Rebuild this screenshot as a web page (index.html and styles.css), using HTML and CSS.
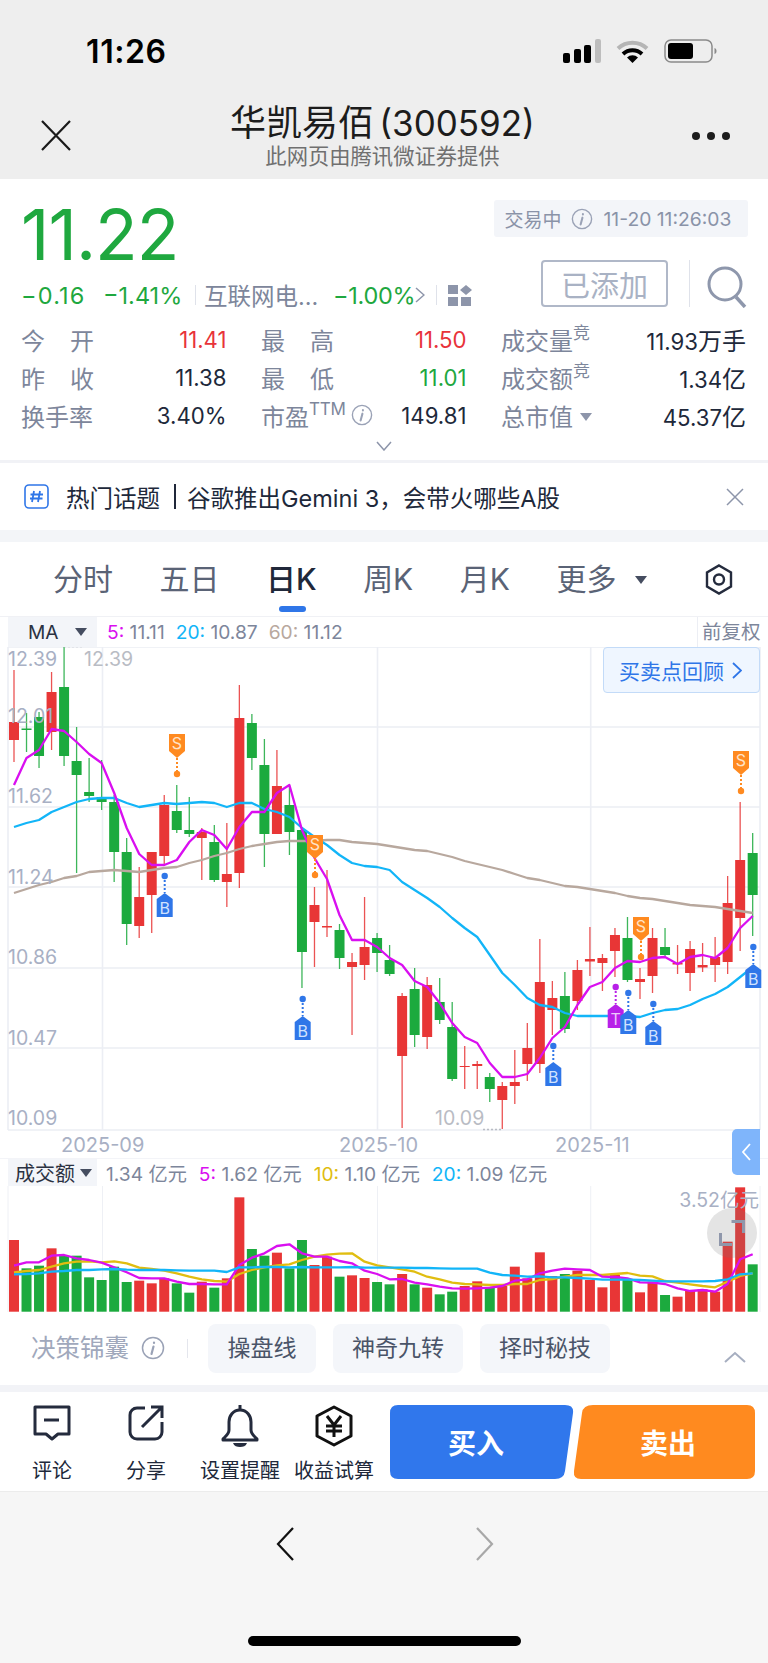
FILE: index.html
```html
<!DOCTYPE html>
<html lang="zh-CN">
<head>
    <meta charset="UTF-8">
    <meta name="viewport" content="width=device-width, initial-scale=1.0">
    <title>华凯易佰 (300592)</title>
    <link rel="stylesheet" href="styles.css">
</head>
<body>
    <header class="topbar">
        <div class="status-bar">
            <span class="clock">11:26</span>
            <div class="status-icons">
                <svg width="38" height="24" viewBox="0 0 38 24"><rect x="0" y="14" width="7" height="10" rx="2" fill="#000"/><rect x="11" y="10" width="7" height="14" rx="2" fill="#000"/><rect x="21" y="6" width="7" height="18" rx="2" fill="#000"/><rect x="32" y="0" width="6" height="24" rx="2" fill="#bdbdbd"/></svg>
                <svg width="33" height="24" viewBox="0 0 33 24"><path d="M2 9.5a21 21 0 0 1 29 0" fill="none" stroke="#b5b5b5" stroke-width="4"/><path d="M7 15a14 14 0 0 1 19 0" fill="none" stroke="#000" stroke-width="4"/><path d="M11 18.5a8 8 0 0 1 11 0L16.500 24z" fill="#000"/></svg>
                <svg width="53" height="24" viewBox="0 0 53 24"><rect x="1" y="1" width="47" height="22" rx="6" fill="none" stroke="#8a8a8a" stroke-width="1.500"/><rect x="4" y="4" width="25" height="16" rx="3" fill="#000"/><path d="M50.500 9c1.500.5 2 1.500 2 3s-.5 2.500-2 3z" fill="#8a8a8a"/></svg>
            </div>
        </div>
        <div class="nav-bar">
            <svg class="nav-close" width="30" height="31" viewBox="0 0 30 31"><path d="M1 1l28 29M29 1L1 30" fill="none" stroke="#1a1a1a" stroke-width="2.200"/></svg>
            <div class="nav-title">
                <h1>华凯易佰 <span class="nav-code">(300592)</span></h1>
                <p>此网页由腾讯微证券提供</p>
            </div>
            <div class="nav-dots"><i></i><i></i><i></i></div>
        </div>
    </header>

    <section class="quote">
        <div class="price-row">
            <div class="price">11.22</div>
            <div class="time-badge">
                <span>交易中</span>
                <svg class="info-icon" width="22" height="22" viewBox="0 0 24 24"><circle cx="12" cy="12" r="10.500" fill="none" stroke="#9aa2b6" stroke-width="1.500"/><path d="M13 6.500v.5M12.500 10.500L10.500 18" fill="none" stroke="#9aa2b6" stroke-width="2.200" stroke-linecap="round"/></svg>
                <span class="badge-time">11-20 11:26:03</span>
            </div>
        </div>
        <div class="change-row">
            <div class="change-group">
                <span class="green change">−0.16</span>
                <span class="green change-pct">−1.41%</span>
                <i class="change-sep"></i>
                <span class="sector">互联网电...</span>
                <span class="green sector-pct">−1.00%</span>
                <svg class="sector-arrow" width="10" height="16" viewBox="0 0 10 16"><path d="M1 1l8 7-8 7" fill="none" stroke="#8d95aa" stroke-width="1.500"/></svg>
                <i class="change-sep sep-second"></i>
                <svg class="sector-icon" width="24" height="21" viewBox="0 0 24 21"><rect x="0" y="0" width="10" height="9" fill="#8d95aa"/><rect x="0" y="12" width="10" height="9" fill="#8d95aa"/><rect x="13" y="12" width="10" height="9" fill="#8d95aa"/><path d="M18 0l6 5-6 5-6-5z" fill="#8d95aa"/></svg>
            </div>
            <button class="added-btn">已添加</button>
            <i class="search-sep"></i>
            <svg class="search-icon" width="40" height="42" viewBox="0 0 40 42"><circle cx="18" cy="18" r="16" fill="none" stroke="#8e97ac" stroke-width="3"/><path d="M29 31l9 10" fill="none" stroke="#8e97ac" stroke-width="3.500"/></svg>
        </div>
        <div class="stats">
            <div class="stat"><span class="label wide">今开</span><span class="value red">11.41</span></div>
            <div class="stat"><span class="label wide">最高</span><span class="value red">11.50</span></div>
            <div class="stat"><span class="label">成交量<sup>竞</sup></span><span class="value">11.93<span class="unit">万手</span></span></div>
            <div class="stat"><span class="label wide">昨收</span><span class="value">11.38</span></div>
            <div class="stat"><span class="label wide">最低</span><span class="value green">11.01</span></div>
            <div class="stat"><span class="label">成交额<sup>竞</sup></span><span class="value">1.34<span class="unit">亿</span></span></div>
            <div class="stat"><span class="label">换手率</span><span class="value">3.40%</span></div>
            <div class="stat">
                <span class="label">市盈<sup class="ttm">TTM</sup><svg class="ttm-info" width="22" height="22" viewBox="0 0 24 24"><circle cx="12" cy="12" r="10.500" fill="none" stroke="#9aa2b6" stroke-width="1.500"/><path d="M13 6.500v.5M12.500 10.500L10.500 18" fill="none" stroke="#9aa2b6" stroke-width="2.200" stroke-linecap="round"/></svg></span>
                <span class="value">149.81</span>
            </div>
            <div class="stat"><span class="label">总市值<i class="caret-down light"></i></span><span class="value">45.37<span class="unit">亿</span></span></div>
        </div>
        <div class="expand">
            <svg width="16" height="10" viewBox="0 0 16 10"><path d="M1 1l7 8 7-8" fill="none" stroke="#8d95aa" stroke-width="1.500"/></svg>
        </div>
    </section>

    <section class="topic">
        <svg width="25" height="25" viewBox="0 0 25 25"><rect x="1" y="1" width="23" height="23" rx="4" fill="#fff" stroke="#2f76e8" stroke-width="1.600"/><path d="M10 7l-2 11M16 7l-2 11M6.500 10.500h12.500M6 14.500h12.500" fill="none" stroke="#2f76e8" stroke-width="1.800"/></svg>
        <span class="topic-text">热门话题<i class="topic-bar"></i>谷歌推出Gemini 3，会带火哪些A股</span>
        <svg class="topic-close" width="18" height="18" viewBox="0 0 18 18"><path d="M1 1l16 16M17 1L1 17" fill="none" stroke="#8d95aa" stroke-width="1.500"/></svg>
    </section>

    <nav class="tabs">
        <span class="tab">分时</span>
        <span class="tab">五日</span>
        <span class="tab active">日K</span>
        <span class="tab">周K</span>
        <span class="tab">月K</span>
        <span class="tab">更多</span>
        <i class="caret-down dark tab-caret"></i>
        <svg class="tab-settings" width="28" height="31" viewBox="0 0 28 31"><path d="M14 1.500l12 7v14l-12 7-12-7v-14z" fill="none" stroke="#242b3d" stroke-width="2.400"/><circle cx="14" cy="15.500" r="5" fill="none" stroke="#242b3d" stroke-width="2.400"/></svg>
    </nav>

    <section class="chart">
        <div class="legend">
            <div class="legend-select">MA<i class="caret-down dark"></i></div>
            <div class="legend-values">
                <span><b class="c-ma5">5:</b> 11.11</span>
                <span><b class="c-ma20">20:</b> 10.87</span>
                <span><b class="c-ma60">60:</b> 11.12</span>
            </div>
            <div class="legend-adjust">前复权</div>
        </div>
        <div class="kline">
            <svg id="kline-svg" width="768" height="511" viewBox="0 647 768 511">
                <g class="grid">
                    <path d="M8 647H760M8 727H760M8 807H760M8 887H760M8 968H760M8 1048H760M8 1130H760M8 647V1130M102.500 647V1130M377.500 647V1130M590.700 647V1130M760 647V1130"/>
                </g>
                <g id="kline-plot"></g>
                <g class="axis">
                    <text x="8" y="666">12.39</text>
                    <text x="8" y="723">12.01</text>
                    <text x="8" y="803">11.62</text>
                    <text x="8" y="884">11.24</text>
                    <text x="8" y="964">10.86</text>
                    <text x="8" y="1045">10.47</text>
                    <text x="8" y="1125">10.09</text>
                    <text class="extreme" x="84" y="666">12.39</text>
                    <text class="extreme" x="435" y="1125">10.09</text>
                    <text class="date" x="61" y="1152">2025-09</text>
                    <text class="date" x="339" y="1152">2025-10</text>
                    <text class="date" x="555" y="1152">2025-11</text>
                </g>
                <path class="dots" d="M64 646.500H84M483 1129.500H503"/>
                <g id="kline-marks"></g>
            </svg>
            <div class="review-btn">买卖点回顾<svg width="10" height="17" viewBox="0 0 10 17"><path d="M1 1l8 7.500-8 7.500" fill="none" stroke="#2f76e8" stroke-width="1.800"/></svg></div>
        </div>
        <div class="legend legend-vol">
            <div class="legend-select">成交额<i class="caret-down dark"></i></div>
            <div class="legend-values">
                <span>1.34 亿元</span>
                <span><b class="c-ma5">5:</b> 1.62 亿元</span>
                <span><b class="c-vol10">10:</b> 1.10 亿元</span>
                <span><b class="c-ma20">20:</b> 1.09 亿元</span>
            </div>
        </div>
        <div class="volume">
            <svg id="volume-svg" width="768" height="127" viewBox="0 1186 768 127">
                <path class="grid-thin" d="M8 1186V1312M102.500 1186V1312M377.500 1186V1312M590.700 1186V1312M760 1186V1312"/>
                <g id="volume-plot"></g>
                <text class="axis-max" x="759" y="1207">3.52亿元</text>
            </svg>
            <div class="zoom-knob">
                <svg width="26" height="26" viewBox="0 0 26 26"><path d="M12.500 1.500H24.500V13M1.500 13V24.500H13" fill="none" stroke="#8f97ab" stroke-width="3"/></svg>
            </div>
        </div>
        <div class="collapse-tab"><svg width="9" height="18" viewBox="0 0 9 18"><path d="M8 1L1 9l7 8" fill="none" stroke="#fff" stroke-width="1.800"/></svg></div>
    </section>

    <section class="tools">
        <span class="tools-title">决策锦囊</span>
        <svg class="tools-info" width="24" height="24" viewBox="0 0 24 24"><circle cx="12" cy="12" r="10.500" fill="none" stroke="#9aa2b6" stroke-width="1.500"/><path d="M13 6.500v.5M12.500 10.500L10.500 18" fill="none" stroke="#9aa2b6" stroke-width="2.200" stroke-linecap="round"/></svg>
        <i class="tools-sep"></i>
        <span class="chip chip-short">操盘线</span>
        <span class="chip">神奇九转</span>
        <span class="chip">择时秘技</span>
        <svg class="tools-caret" width="22" height="12" viewBox="0 0 22 12"><path d="M1 11l10-9 10 9" fill="none" stroke="#a6aec0" stroke-width="2"/></svg>
    </section>

    <footer class="actionbar">
        <div class="action">
            <svg width="38" height="36" viewBox="0 0 38 36"><path d="M2 2h34v27H25l-6 5-6-5H2z" fill="none" stroke="#242b3d" stroke-width="3" stroke-linejoin="round"/><path d="M11 15h15" stroke="#242b3d" stroke-width="3"/></svg>
            <span>评论</span>
        </div>
        <div class="action">
            <svg width="36" height="36" viewBox="0 0 36 36"><path d="M17 3H9a7 7 0 0 0-7 7v17a7 7 0 0 0 7 7h18a7 7 0 0 0 7-7V17" fill="none" stroke="#242b3d" stroke-width="3"/><path d="M14 22L33 3M23 2h11v11" fill="none" stroke="#242b3d" stroke-width="3"/></svg>
            <span>分享</span>
        </div>
        <div class="action">
            <svg width="40" height="42" viewBox="0 0 40 42"><path d="M20 5c-7 0-11 6-11 12v8c0 4-3 6-6 9v1h34v-1c-3-3-6-5-6-9v-8c0-6-4-12-11-12z" fill="none" stroke="#242b3d" stroke-width="3" stroke-linejoin="round"/><path d="M20 0v5" stroke="#242b3d" stroke-width="3"/><path d="M13 38h14c-1 3-4 4-7 4s-6-1-7-4z" fill="#242b3d"/></svg>
            <span>设置提醒</span>
        </div>
        <div class="action">
            <svg width="40" height="42" viewBox="0 0 40 42"><path d="M20 2l17 9v20l-17 9-17-9V11z" fill="none" stroke="#111" stroke-width="3" stroke-linejoin="round"/><path d="M13 11l7 9 7-9M20 20v12M12 21h16M12 26h16" fill="none" stroke="#111" stroke-width="3"/></svg>
            <span>收益试算</span>
        </div>
        <button class="trade-btn buy">买入</button>
        <button class="trade-btn sell">卖出</button>
    </footer>

    <div class="browser-bar">
        <div class="browser-arrows">
            <svg width="18" height="34" viewBox="0 0 18 34"><path d="M17 1L2 17l15 16" fill="none" stroke="#111" stroke-width="2.200"/></svg>
            <svg width="18" height="34" viewBox="0 0 18 34"><path d="M1 1l15 16L1 33" fill="none" stroke="#a8a8a8" stroke-width="2.200"/></svg>
        </div>
        <div class="home-indicator"></div>
    </div>

    <script src="chart.js"></script>
</body>
</html>
```

FILE: styles.css
```css
* {
    box-sizing: border-box;
}

body {
    margin: 0;
    width: 768px;
    height: 1663px;
    overflow: hidden;
    background-color: #fff;
    color: #20283a;
    font-family: Inter, "Noto Sans CJK SC", sans-serif;
}

i {
    display: block;
    font-style: normal;
}

.green { color: #1fa83f; }
.red { color: #e8333a; }

.caret-down {
    display: inline-block;
    width: 0;
    height: 0;
    border-left: 6px solid transparent;
    border-right: 6px solid transparent;
    border-top: 8px solid #8d95aa;
}

.caret-down.dark {
    border-top-color: #454d60;
}

/* top bar */
.topbar {
    height: 179px;
    background-color: #eeeeee;
}

.status-bar {
    height: 100px;
    display: flex;
    padding: 39px 51px 0 86px;
    justify-content: space-between;
}

.clock {
    font-size: 32px;
    font-weight: 600;
    line-height: 26px;
    letter-spacing: 0.6px;
    color: #000;
}

.status-icons {
    display: flex;
    gap: 15px;
    height: 24px;
}

.nav-bar {
    height: 79px;
    display: flex;
    align-items: flex-start;
    padding: 0 38px 0 41px;
}

.nav-close {
    margin-top: 20px;
}

.nav-title {
    flex: 1;
    text-align: center;
    padding-left: 2px;
}

.nav-title h1 {
    margin: 3px 0 0;
    font-size: 36px;
    font-weight: 400;
    line-height: 40px;
    word-spacing: -5px;
    color: #1c1c1c;
}

.nav-code {
    font-size: 35px;
}

.nav-title p {
    margin: -1px 0 0;
    font-size: 21.300px;
    line-height: 28px;
    color: #707070;
}

.nav-dots {
    display: flex;
    gap: 7px;
    margin-top: 32px;
}

.nav-dots i {
    width: 8px;
    height: 8px;
    border-radius: 50%;
    background-color: #1c1c1c;
}

/* quote */
.quote {
    height: 284px;
    padding: 0 21px 0 21px;
    border-bottom: 3px solid #f1f2f6;
}

.price-row {
    height: 81px;
    display: flex;
    justify-content: space-between;
    align-items: flex-start;
    padding-top: 21px;
}

.price {
    font-size: 70px;
    line-height: 70px;
    letter-spacing: -1px;
    color: #1fa83f;
}

.time-badge {
    width: 254px;
    height: 37px;
    display: flex;
    align-items: center;
    padding-left: 11px;
    gap: 9px;
    margin-right: -0.5px;
    border-radius: 3px;
    background-color: #f3f5f9;
    color: #8a93a8;
    font-size: 19px;
    white-space: nowrap;
}

.badge-time {
    margin-left: 2px;
    font-size: 19.300px;
}

.change-row {
    height: 61px;
    display: flex;
    align-items: flex-start;
}

.change-group {
    display: flex;
    align-items: center;
    height: 48px;
    margin-top: 11px;
    font-size: 23.500px;
    white-space: nowrap;
}

.change { width: 82px; letter-spacing: 1.200px; }
.change-pct { width: 92px; }
.sector { margin-left: 8px; color: #7d869b; width: 129px; }
.sector-pct { width: 82px; letter-spacing: -0.3px; }
.sector-icon { margin-left: 11px; }

.change-sep {
    width: 1px;
    height: 20px;
    background-color: #dfe2ea;
}

.sep-second {
    margin-left: 11px;
}

.added-btn {
    width: 127px;
    height: 47px;
    margin-left: auto;
    border: 2px solid #b0b8c8;
    border-radius: 4px;
    background-color: #fff;
    color: #a9b2c4;
    font: inherit;
    font-size: 29px;
    padding: 0;
}

.search-sep {
    width: 1px;
    height: 47px;
    margin: 0 17px 0 21px;
    background-color: #dfe2ea;
}

.search-icon {
    margin-top: 6px;
}

.stats {
    display: grid;
    grid-template-columns: 205.500px 205.500px 245px;
    column-gap: 34.500px;
    grid-auto-rows: 38px;
    margin-top: -1px;
}

.stat {
    display: flex;
    justify-content: space-between;
    align-items: center;
    white-space: nowrap;
}

.label {
    display: flex;
    align-items: center;
    font-size: 24px;
    color: #7d869b;
}

.label.wide {
    display: block;
    width: 73px;
    text-align: justify;
    text-align-last: justify;
}

.label sup {
    font-size: 17px;
    line-height: 1;
    align-self: flex-start;
    margin-top: 3px;
}

.label sup.ttm {
    letter-spacing: -0.2px;
}

.ttm-info {
    margin-left: 5px;
}

.label .caret-down {
    margin-left: 7px;
    margin-top: 3px;
}

.value {
    font-size: 22.200px;
    color: #20283a;
}

.value .unit {
    font-size: 24px;
}

.value.red { color: #e8333a; }
.value.green { color: #1fa83f; }

.expand {
    height: 22px;
    display: flex;
    justify-content: center;
    padding-top: 7px;
}

/* topic strip */
.topic {
    height: 67px;
    display: flex;
    align-items: center;
    padding-left: 24px;
}

.topic-text {
    display: flex;
    align-items: center;
    margin-left: 17px;
    font-size: 23.500px;
    color: #20283a;
    white-space: pre;
}

.topic-bar {
    width: 2px;
    height: 25px;
    margin: 0 11px 0 14px;
    background-color: #20283a;
}

.topic-close {
    margin-left: auto;
    margin-right: 24px;
}

/* tabs */
.tabs {
    height: 86px;
    padding: 12px 0 0 53px;
    display: flex;
    align-items: center;
    gap: 46.500px;
    border-top: 12px solid #f3f5f8;
    color: #5a6376;
    font-size: 30px;
    position: relative;
}

.tab {
    position: relative;
    line-height: 40px;
    margin-top: -12px;
}

.tab.active {
    color: #20283a;
    font-weight: 500;
}

.tab.active::after {
    content: "";
    position: absolute;
    left: 13px;
    top: 47px;
    width: 27px;
    height: 6px;
    border-radius: 3px;
    background-color: #2f76e8;
}

.tab-caret {
    margin: -10px 0 0 -28px;
}

.tab-settings {
    margin: -12px 35px 0 auto;
}

/* chart */
.chart {
    position: relative;
}

.legend {
    height: 31px;
    display: flex;
    border-top: 1.500px solid #f0f1f5;
    font-size: 19.200px;
    color: #7d869b;
}

.legend-select {
    width: 89px;
    margin-left: 8px;
    padding-left: 20px;
    display: flex;
    align-items: center;
    gap: 16px;
    background-color: #f3f5f9;
    color: #2b3242;
}

.legend-values {
    display: flex;
    align-items: center;
    gap: 11px;
    padding-left: 10px;
    white-space: nowrap;
}

.legend-values b {
    font-weight: 400;
}

.c-ma5 { color: #d90ff0; }
.c-ma20 { color: #12b5f8; }
.c-ma60 { color: #b8a89e; }
.c-vol10 { color: #e0bd10; }

.legend-adjust {
    margin-left: auto;
    width: 71px;
    padding-left: 4px;
    font-size: 19.500px;
    line-height: 30px;
    border-left: 1.500px solid #eceef4;
}

.legend-vol {
    height: 28px;
    border-top: 1.500px solid #f3f4f8;
}

.legend-vol .legend-select {
    padding-left: 7px;
    gap: 5px;
    font-size: 20px;
}

.legend-vol .legend-values {
    gap: 12px;
    padding-left: 9px;
}

.kline,
.volume {
    position: relative;
}

.kline svg,
.volume svg {
    display: block;
}

.grid path {
    fill: none;
    stroke: #eceef4;
    stroke-width: 1.600;
}

.grid-thin {
    fill: none;
    stroke: #eef0f5;
    stroke-width: 1;
}

.axis text,
.axis-max {
    font-size: 19.500px;
    fill: #a8b0c4;
}

.axis .date {
    font-size: 20px;
}

.axis .extreme {
    fill: #b9bcc4;
}

.axis-max {
    text-anchor: end;
}

.dots {
    fill: none;
    stroke: #b9bcc4;
    stroke-width: 1.500;
    stroke-dasharray: 2 2;
}

.mark-label {
    font-size: 16px;
    text-anchor: middle;
}

.review-btn {
    position: absolute;
    top: 0;
    left: 603px;
    width: 157px;
    height: 46px;
    display: flex;
    align-items: center;
    gap: 8px;
    padding-left: 15px;
    border: 1px solid #c3dbf8;
    border-radius: 4px;
    background-color: #eff6ff;
    color: #2f76e8;
    font-size: 21px;
    white-space: nowrap;
}

.collapse-tab {
    position: absolute;
    left: 732px;
    top: 513px;
    width: 28px;
    height: 46px;
    display: flex;
    align-items: center;
    justify-content: center;
    border-radius: 5px 0 0 5px;
    background-color: #7fb5fb;
}

.zoom-knob {
    position: absolute;
    left: 707px;
    top: 22px;
    width: 50px;
    height: 50px;
    display: flex;
    align-items: center;
    justify-content: center;
    border-radius: 50%;
    background-color: rgba(120, 120, 120, 0.2);
}

/* tools row */
.tools {
    height: 79px;
    display: flex;
    align-items: flex-start;
    padding: 11px 0 0 31px;
    border-bottom: 7px solid #f2f3f7;
}

.tools-title {
    font-size: 24.500px;
    line-height: 49px;
    color: #a0a8bc;
    width: 98px;
}

.tools-info {
    margin: 12px 0 0 12px;
}

.tools-sep {
    width: 1px;
    height: 19px;
    margin: 15px 20px 0 22px;
    background-color: #e4e6ed;
}

.chip {
    width: 130px;
    height: 49px;
    margin-right: 17px;
    border-radius: 8px;
    background-color: #f4f6fa;
    color: #4a5468;
    font-size: 23px;
    line-height: 48px;
    text-align: center;
}

.chip-short {
    width: 108px;
}

.tools-caret {
    margin: 27px 0 0 97px;
}

/* action bar */
.actionbar {
    height: 100px;
    display: flex;
    align-items: flex-start;
    padding: 13px 0 0 5px;
    border-bottom: 1px solid #ececec;
}

.action {
    width: 94px;
    height: 80px;
    display: flex;
    flex-direction: column;
    align-items: center;
    justify-content: space-between;
    font-size: 20px;
    line-height: 28px;
    color: #20283a;
    white-space: nowrap;
}

.trade-btn {
    width: 184px;
    height: 74px;
    border: 0;
    color: #fff;
    font: inherit;
    font-size: 28px;
    font-weight: 600;
}

.buy {
    margin-left: 9px;
    padding: 0 12px 0 0;
    background-color: #3077ec;
    clip-path: path("M8 0H175Q184 0 183 8L175 66Q174 74 165 74H8Q0 74 0 66V8Q0 0 8 0Z");
}

.sell {
    width: 182px;
    margin-left: -1px;
    padding: 0 0 0 8px;
    background-color: #ff8a1f;
    clip-path: path("M20 0H174Q182 0 182 8V66Q182 74 174 74H8Q0 74 1 66L9 8Q10 0 20 0Z");
}

/* browser bar */
.browser-bar {
    height: 171px;
    background-color: #f6f6f6;
    position: relative;
}

.browser-arrows {
    display: flex;
    justify-content: center;
    gap: 182px;
    padding: 35px 0 0 0;
    margin-left: 1px;
}

.home-indicator {
    width: 273px;
    height: 10px;
    margin: 75px 0 0 248px;
    border-radius: 5px;
    background-color: #000;
}
```

FILE: chart.js
```js
var RED = "#e83636";
var GREEN = "#1caa3e";
var STEP = 12.52;

function cx(i) {
    return 14 + i * STEP;
}

// r/g, wick top, body top, body bottom, wick bottom (page px)
var candles = [
    ["r",670,722,740,762],["g",713,728.5,730,752],["g",712,717,756,768],["r",672,692,732,750],
    ["g",647,687,756,766],["g",727,761,775,873],["g",758,792,796,802],["g",760,797,802,810],
    ["g",795,802,852,882],["g",838,852,924,945],["r",867,897,926,938],["r",852,852,895,933],
    ["r",795,805,856,865],["g",785,811,830,833],["g",797,830,834,837],["r",828,832,838,880],
    ["g",825,842,880,882],["r",823,874,882,907],["r",685,718,873,888],["g",714,723,758,770],
    ["g",739,765,834,867],["r",750,786,834,834],["g",787,805,832,855],["g",830,830,952,988],
    ["r",887,905,922,967],["r",870,926,927.5,937],["g",924,930,958,969],["r",953,962,967,1035],
    ["r",897,947,965,980],["g",933,938,953,972],["g",945,960,974,976],["r",993,996,1056,1128],
    ["g",968,989,1035,1047],["r",977,985,1037,1049],["g",978,1002,1020,1024],["g",1002,1027,1079,1081],
    ["r",1046,1066,1067,1089],["r",1061,1064,1066,1089],["g",1073,1077,1089,1102],["r",1082,1086,1100,1129],
    ["r",1050,1082,1086,1104],["r",1023,1048,1064,1081],["r",939,982,1064,1073],["r",981,998,1010,1035],
    ["g",972,996,1029,1033],["r",960,970,1001,1010],["r",927,959,961.500,976],["r",954,958,963,991],
    ["r",928,935,951,977],["g",917,938,980,982],["r",968,979,982,999],["r",928,938,976,993],
    ["g",928,947,955,957],["r",945,963,964.500,974],["r",941,949,973,991],["r",943,965,967.500,972],
    ["r",937,957,965,982],["r",876,903,962,974],["r",802,860,918,951],["g",833,853,895,936]
];

var ma5 = [785,758,750,729,731,742,754,763,793,828,854,865,865,860,842,830,835,849,827,812,812,793,785,830,858,879,915,940,940,947,958,965,981,987,1003,1023,1037,1043,1063,1077,1077,1074,1058,1038,1027,1005,987,982,968,961,962,958,957,964,957,955,958,948,928,916];
var ma20 = [827,823,820,812,807,802,799,798,798,803,807,805,803,804,803,802,803,807,803,803,809,812,817,828,837,845,855,863,866,867,870,882,890,898,907,918,928,937,955,973,985,998,1005,1007,1013,1016,1016,1016,1016,1016,1017,1013,1010,1009,1005,999,994,987,977,967];
var ma60 = [893,889,885,882,878,876,872,871,870,871,872,870,868,867,863,860,856,853,849,846,844,842,841,841,841,840,840,842,843,844,846,848,850,851,854,857,861,864,867,870,874,878,880,883,886,887,889,891,893,896,898,899,901,903,905,906,907,909,911,913];

function polyline(values, color, toY) {
    var pts = values.map(function(v, i) {
        return cx(i).toFixed(1) + "," + toY(v).toFixed(1);
    }).join(" ");
    return '<polyline points="' + pts + '" fill="none" stroke="' + color + '" stroke-width="2.300" stroke-linejoin="round"/>';
}

function samePage(v) {
    return v;
}

var plot = "";
candles.forEach(function(c, i) {
    var color = c[0] === "r" ? RED : GREEN;
    var x = cx(i);
    plot += '<path d="M' + x + " " + c[1] + "V" + c[4] + '" stroke="' + color + '" stroke-width="1.300" opacity="0.85"/>';
    plot += '<rect x="' + (x - 5) + '" y="' + c[2] + '" width="10" height="' + (c[3] - c[2]) + '" fill="' + color + '"/>';
});
plot += polyline(ma60, "#b8a89e", samePage);
plot += polyline(ma20, "#12b5f8", samePage);
plot += polyline(ma5, "#d90ff0", samePage);
document.getElementById("kline-plot").innerHTML = plot;

// signal flags: x, top of flag, y of the dot
function sellFlag(x, top, dot) {
    return '<path d="M' + x + " " + (top + 24) + "V" + dot + '" stroke="#ff8a20" stroke-width="2" stroke-dasharray="2 2"/>' +
        '<circle cx="' + x + '" cy="' + dot + '" r="3.200" fill="#ff8a20"/>' +
        '<path d="M' + (x - 8) + " " + top + "h16v17l-8 7-8-7z" + '" fill="#ff8a20"/>' +
        '<text class="mark-label" x="' + x + '" y="' + (top + 15) + '" fill="#ffe3c7">S</text>';
}

function buyFlag(x, peak, dot, label, color, textColor) {
    return '<path d="M' + x + " " + dot + "V" + peak + '" stroke="' + color + '" stroke-width="2" stroke-dasharray="2 2"/>' +
        '<circle cx="' + x + '" cy="' + dot + '" r="3.200" fill="' + color + '"/>' +
        '<path d="M' + x + " " + peak + "l8 6v18h-16v-18z" + '" fill="' + color + '"/>' +
        '<text class="mark-label" x="' + x + '" y="' + (peak + 21) + '" fill="' + textColor + '">' + label + "</text>";
}

var BLUE = "#2f76e8";
var BLUE_TEXT = "#cfe2ff";
document.getElementById("kline-marks").innerHTML =
    sellFlag(177, 734, 774) +
    sellFlag(315, 835, 875) +
    sellFlag(641, 917, 957) +
    sellFlag(741, 751, 791) +
    buyFlag(164.7, 893, 876, "B", BLUE, BLUE_TEXT) +
    buyFlag(302.7, 1016, 999, "B", BLUE, BLUE_TEXT) +
    buyFlag(553.3, 1062, 1046, "B", BLUE, BLUE_TEXT) +
    buyFlag(615.7, 1004, 987, "T", "#b820e8", "#ecc8fb") +
    buyFlag(628.3, 1010, 993, "B", BLUE, BLUE_TEXT) +
    buyFlag(653.3, 1021, 1004, "B", BLUE, BLUE_TEXT) +
    buyFlag(753.3, 964, 947, "B", BLUE, BLUE_TEXT);

// volume panel, values read at 3x so y = 1150 + v / 3
function volY(v) {
    return 1150 + v / 3;
}

var volTops = [270,355,347,295,318,317,382,390,350,396,392,400,385,400,428,395,413,385,142,297,317,308,355,270,345,320,380,376,384,396,403,372,403,413,433,425,408,394,412,408,350,385,307,378,372,362,390,412,375,388,427,395,435,440,423,418,425,275,112,343];
var vol5 = [347,337,337,317,315,325,330,338,352,367,384,385,385,395,402,402,403,403,345,323,310,288,283,310,320,320,333,340,362,372,388,387,398,403,410,415,416,415,413,408,392,388,370,362,356,358,360,380,381,385,397,398,402,415,423,420,425,402,328,313];
var vol10 = [367,363,360,350,340,335,334,337,334,340,353,357,362,370,380,388,393,395,372,360,352,346,343,330,320,314,311,310,335,346,352,358,365,380,388,398,402,403,405,405,402,402,390,387,380,375,375,375,372,369,377,379,393,398,403,408,412,395,378,370];
var vol20 = [373,372,370,365,363,360,360,358,357,359,360,360,360,361,362,362,362,366,352,352,351,351,352,351,352,352,352,351,353,353,353,353,354,354,355,356,356,356,368,375,377,380,379,382,382,384,386,389,389,389,390,392,394,394,394,394,393,388,373,370];

var volPlot = "";
volTops.forEach(function(top, i) {
    var y = volY(top);
    var color = candles[i][0] === "r" ? RED : GREEN;
    volPlot += '<rect x="' + (cx(i) - 5) + '" y="' + y + '" width="10" height="' + (1311.7 - y) + '" fill="' + color + '"/>';
});
volPlot += polyline(vol10, "#e0bd10", volY);
volPlot += polyline(vol5, "#d90ff0", volY);
volPlot += polyline(vol20, "#12b5f8", volY);
document.getElementById("volume-plot").innerHTML = volPlot;
```
